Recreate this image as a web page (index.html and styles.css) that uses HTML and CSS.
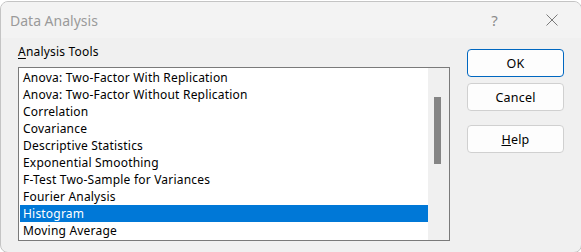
FILE: index.html
```html
<!DOCTYPE html>
<html lang="en">
<head>
    <meta charset="UTF-8">
    <title>Data Analysis</title>
    <link rel="stylesheet" href="styles.css">
</head>
<body>
    <div class="window">
        <div class="titlebar">
            <span class="title">Data Analysis</span>
            <span class="help-q">?</span>
            <svg class="close" width="12" height="12" viewBox="0 0 12 12">
                <path d="M0.5 0.5 L11.5 11.5 M11.5 0.5 L0.5 11.5" stroke="#7a7a7a" stroke-width="1" fill="none"/>
            </svg>
        </div>
        <div class="content">
            <div class="tools">
                <div class="label"><u>A</u>nalysis Tools</div>
                <div class="listbox">
                    <ul class="items">
                        <li>Anova: Two-Factor With Replication</li>
                        <li>Anova: Two-Factor Without Replication</li>
                        <li>Correlation</li>
                        <li>Covariance</li>
                        <li>Descriptive Statistics</li>
                        <li>Exponential Smoothing</li>
                        <li>F-Test Two-Sample for Variances</li>
                        <li>Fourier Analysis</li>
                        <li class="selected">Histogram</li>
                        <li>Moving Average</li>
                    </ul>
                    <div class="scrollbar"><div class="thumb"></div></div>
                </div>
            </div>
            <div class="buttons">
                <button class="btn default">OK</button>
                <button class="btn">Cancel</button>
                <button class="btn help"><u>H</u>elp</button>
            </div>
        </div>
    </div>
</body>
</html>
```

FILE: styles.css
```css
* { margin: 0; padding: 0; box-sizing: border-box; }
body {
    font-family: "Noto Sans", "Liberation Sans", sans-serif;
    font-size: 12px;
    letter-spacing: 0.2px;
    background: #ffffff;
    width: 581px;
    height: 252px;
    overflow: hidden;
}
.window {
    margin-top: 1px;
    width: 582px;
    height: 252px;
    border: 1px solid #c4c4c4;
    border-radius: 8px;
    background: #f0f0f0;
    overflow: hidden;
}
.titlebar {
    height: 36px;
    background: #f3f3f3;
    display: flex;
    align-items: center;
    padding-left: 9px;
}
.title {
    font-size: 14px;
    letter-spacing: 0;
    color: #9a9a9a;
    flex: 1;
}
.help-q {
    font-size: 15px;
    color: #8a8a8a;
    margin-right: 48px;
}
.close {
    margin-right: 23px;
}
.content {
    display: flex;
    padding: 6px 0 0 17px;
}
.label {
    height: 23px;
    line-height: 16px;
    color: #000;
}
.label u { text-decoration-thickness: 1px; text-underline-offset: 2px; }
.listbox {
    width: 432px;
    height: 174px;
    border: 1px solid #7a7a7a;
    background: #fff;
    display: flex;
}
.items {
    list-style: none;
    flex: 1;
    padding: 1px 0 0 1px;
}
.items li {
    height: 17px;
    line-height: 17px;
    padding-left: 3px;
    color: #000;
    white-space: nowrap;
}
.items li.selected {
    background: #0078d7;
    color: #fff;
}
.scrollbar {
    width: 21px;
    background: #f0f0f0;
    padding: 29px 0 0 6px;
}
.thumb {
    width: 7px;
    height: 67px;
    background: #858585;
}
.buttons {
    display: flex;
    flex-direction: column;
    margin-left: 17px;
    padding-top: 5px;
}
.btn {
    width: 97px;
    height: 28px;
    font-family: inherit;
    font-size: 12.5px;
    letter-spacing: 0.2px;
    color: #000;
    background: #fdfdfd;
    border: 1px solid #d0d0d0;
    border-radius: 4px;
    margin-bottom: 6px;
}
.btn.default {
    border-color: #0067c0;
}
.btn.help {
    margin-top: 8px;
}
```
